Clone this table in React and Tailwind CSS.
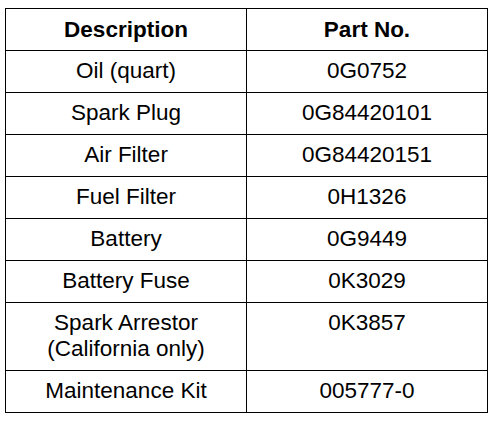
const rows = [
  ['Oil (quart)', '0G0752'],
  ['Spark Plug', '0G84420101'],
  ['Air Filter', '0G84420151'],
  ['Fuel Filter', '0H1326'],
  ['Battery', '0G9449'],
  ['Battery Fuse', '0K3029'],
  ['Spark Arrestor\n(California only)', '0K3857'],
  ['Maintenance Kit', '005777-0'],
];

export default function App() {
  return (
    <div className="min-h-[421px] bg-white pl-[5px] pt-[8px]" style={{ fontFamily: '"Liberation Sans", Arial, sans-serif' }}>
      <table className="w-[483px] table-fixed border-collapse text-[22.5px] leading-[26px] text-black">
        <thead>
          <tr className="h-[42px]">
            <th className="w-[241px] border border-black align-middle font-bold">Description</th>
            <th className="border border-black align-middle font-bold">Part No.</th>
          </tr>
        </thead>
        <tbody>
          {rows.map(([desc, part]) => (
            <tr key={part} className="h-[42px]">
              <td className="whitespace-pre-line border border-black pt-[7px] pb-[8px] text-center align-top">{desc}</td>
              <td className="border border-black pt-[7px] pb-[8px] text-center align-top">{part}</td>
            </tr>
          ))}
        </tbody>
      </table>
    </div>
  );
}
